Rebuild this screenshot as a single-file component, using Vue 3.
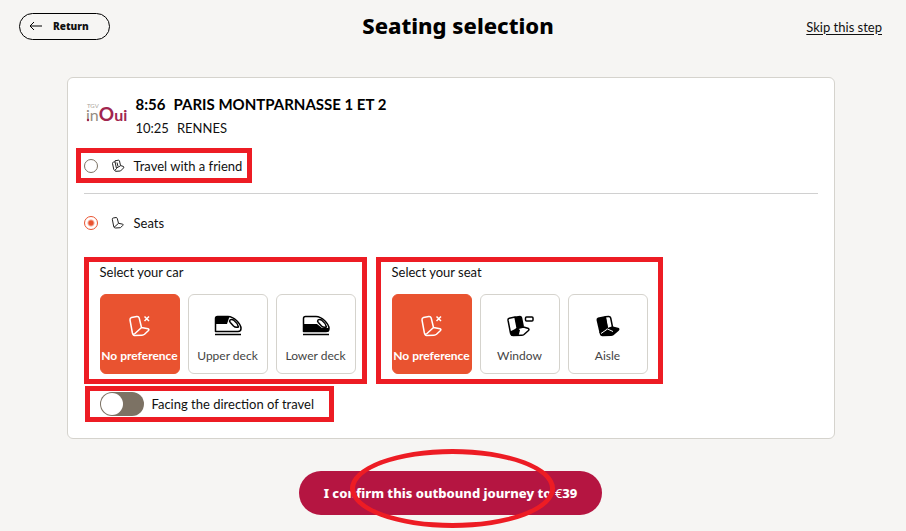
<script setup>
import { ref } from 'vue'

const mode = ref('seats')
const facing = ref(false)
const choices = ref({ car: 'any', seat: 'any' })

const groups = [
  {
    id: 'car',
    title: 'Select your car',
    options: [
      { value: 'any', label: 'No preference', icon: 'any' },
      { value: 'upper', label: 'Upper deck', icon: 'upper' },
      { value: 'lower', label: 'Lower deck', icon: 'lower' },
    ],
  },
  {
    id: 'seat',
    title: 'Select your seat',
    options: [
      { value: 'any', label: 'No preference', icon: 'any' },
      { value: 'window', label: 'Window', icon: 'window' },
      { value: 'aisle', label: 'Aisle', icon: 'aisle' },
    ],
  },
]
</script>

<template>
  <div class="page">
    <header class="top">
      <button class="return" type="button">
        <svg width="14" height="10" viewBox="0 0 14 10" aria-hidden="true">
          <path d="M13 5H1M5 1L1 5l4 4" />
        </svg>
        Return
      </button>
      <h1>Seating selection</h1>
      <a class="skip" href="#">Skip this step</a>
    </header>

    <main>
      <section class="card">
        <div class="journey">
          <svg class="logo" width="44" height="22" viewBox="0 0 44 22" role="img" aria-label="TGV inOui">
            <text class="tgv" x="1" y="5">TGV</text>
            <text x="0" y="18"><tspan class="in">in</tspan><tspan class="o">O</tspan><tspan class="ui">ui</tspan></text>
            <circle cx="2" cy="17" r="1.200" fill="#a1254f" />
          </svg>
          <div class="stops">
            <p class="from"><span>8:56</span><span>PARIS MONTPARNASSE 1 ET 2</span></p>
            <p><span>10:25</span><span>RENNES</span></p>
          </div>
        </div>

        <label class="mode friend">
          <input v-model="mode" type="radio" name="mode" value="friend" />
          <svg width="14" height="14" viewBox="0 0 14 14" aria-hidden="true">
            <path d="M1.500 4.500Q1.300 3.500 2.300 3.200L4 2.800 5.500 9.500 3.800 11.500 2.800 10.500zM4 2.800L4 1.800 7.500 1.200Q8.300 1.200 8.500 2L9.500 6.500 12.500 7.500Q13.200 8 12.500 9L9.500 12 5 12.300Q4 12.300 3.800 11.500M5.500 9L9.500 6.800M6 3.500L7 7.500" />
          </svg>
          <span>Travel with a friend</span>
          <i class="mark mark-friend"></i>
        </label>
        <hr />
        <label class="mode">
          <input v-model="mode" type="radio" name="mode" value="seats" />
          <svg width="14" height="14" viewBox="0 0 14 14" aria-hidden="true">
            <path d="M1.300 3.200Q1.200 2.200 2.200 2L5 1.500Q6 1.500 6.300 2.500L7.500 7.300 4 10.500Q3 11.300 2.700 10.500zM7.500 7.300L11.800 8.200Q12.500 8.500 11.900 9.300L9.500 11.700 4.500 12Q3 12 2.700 10.500" />
          </svg>
          <span>Seats</span>
        </label>

        <div class="groups">
          <fieldset v-for="group in groups" :key="group.id" class="group">
            <legend>{{ group.title }}</legend>
            <div class="tiles">
              <button
                v-for="option in group.options"
                :key="option.value"
                class="tile"
                :class="{ selected: choices[group.id] === option.value }"
                type="button"
                :aria-pressed="choices[group.id] === option.value"
                @click="choices[group.id] = option.value"
              >
                <svg v-if="option.icon === 'any'" width="24" height="24" viewBox="0 0 24 24" aria-hidden="true">
                  <path class="line" d="M2 7Q1.800 5 3.500 4.500L8.800 3.500Q10.700 3.300 11.200 5L13.500 14.500 7 20.500Q5 22 4.400 20zM13.500 14.500L20 15.800Q21.500 16.300 20.500 17.500L16.500 21.300Q15.500 22.200 14 22.200L6.500 22.500Q4.800 22.500 4.400 20M16.500 3.500l4.500 4.500M21 3.500l-4.500 4.500" />
                </svg>
                <svg v-else-if="option.icon === 'upper' || option.icon === 'lower'" width="28" height="24" viewBox="0 0 28 24" aria-hidden="true">
                  <path class="line" d="M1.500 18.500V5.500Q1.500 3.500 3.500 3.500H14C20 3.500 27 11 27 15.500Q27 18.500 24 18.500zM1 21.500H27" />
                  <path v-if="option.icon === 'upper'" d="M1.500 11V5.500Q1.500 3.500 3.500 3.500H15.500L13 11z" />
                  <path v-else d="M1.500 11H15L20 15H27V18.500H1.500z" />
                  <path class="glass" d="M16 7Q17.500 6 19.500 7Q23.500 10 24.500 14Q21.500 15 19.500 13L16.300 9.500Q15 8 16 7z" />
                </svg>
                <svg v-else-if="option.icon === 'window'" width="28" height="24" viewBox="0 0 28 24" aria-hidden="true">
                  <path class="line" d="M2 7.200Q1.800 5.700 3.300 5.300L9 4 11.200 15 6.500 20.500 4.500 20z" />
                  <path d="M8.800 3.500L14 2.800Q15.800 2.800 16.200 4.500L18 13.500 11.200 16zM4 18.500L11.200 15 14 17 12.500 23H7Q4.800 23 4.300 21z" />
                  <path class="line" d="M11.200 15.500L17.500 14 22.500 15.500Q23.500 16.200 22.500 17.500L18 21.500Q17 22.300 15.500 22.300L7 22.500Q5.200 22.500 4.800 20.500" />
                  <path class="line" d="M20.500 4H26Q27 4 27 5V7Q27 8 26 8H20.500Q19.500 8 19.500 7V5Q19.500 4 20.500 4z" />
                </svg>
                <svg v-else width="24" height="24" viewBox="0 0 24 24" aria-hidden="true">
                  <path d="M.5 7Q.3 5 2 4.500L9.500 3 11.800 14.500 5 21 3.500 20z" />
                  <path class="line" d="M9.300 3.800L12.500 3.400Q14.300 3.300 14.700 5L16.500 14 11.500 16z" />
                  <path d="M3.500 19L11 15.500 17 13.500 23 15Q24 16 23 17.500L17.500 22.300Q16.500 23 15 23L6.500 23.200Q4 23.200 3.600 20z" />
                  <path class="seam" d="M11.500 16L17 18.500M11.500 16L5 20.500" />
                </svg>
                <span>{{ option.label }}</span>
              </button>
            </div>
            <i class="mark" :class="'mark-' + group.id"></i>
          </fieldset>
        </div>

        <label class="facing">
          <input v-model="facing" type="checkbox" role="switch" />
          <span>Facing the direction of travel</span>
          <i class="mark mark-facing"></i>
        </label>
      </section>

      <div class="confirm-row">
        <button class="confirm" type="button">
          I confirm this outbound journey to <span class="euro">€</span>39
          <i class="ring"></i>
        </button>
      </div>
    </main>
  </div>
</template>

<style>
body {
  margin: 0;
  background: #f6f5f3;
}
</style>

<style scoped>
* {
  box-sizing: border-box;
}
.page {
  min-height: 100vh;
  overflow: hidden;
  background: #f6f5f3;
  color: #111;
  font: 13px/24px Lato, "Liberation Sans", sans-serif;
}
button {
  font: inherit;
  color: inherit;
  cursor: pointer;
}
.top {
  display: flex;
  align-items: center;
  justify-content: space-between;
  padding: 12px 24px 0 19px;
}
.return {
  display: flex;
  align-items: center;
  gap: 10px;
  height: 27px;
  padding: 0 20px 1px 9px;
  border: 1px solid #000;
  border-radius: 14px;
  background: none;
  font: 800 10px/16px "Open Sans", sans-serif;
}
.return svg {
  fill: none;
  stroke: #000;
}
h1 {
  margin: 0 0 3px;
  color: #000;
  font: 800 22px/26px "Noto Sans", sans-serif;
}
.skip {
  color: #111;
  text-decoration: underline;
  text-underline-offset: 2px;
}
main {
  padding: 36px 5px 0 0;
}
.card {
  max-width: 768px;
  margin: 0 auto;
  padding: 14px 16px 22px;
  border: 1px solid #d5d3cd;
  border-radius: 6px;
  background: #fff;
}
.journey {
  display: flex;
  gap: 6px;
}
.logo {
  margin: 11px 0 0 2px;
}
.logo text {
  font-family: Lato, sans-serif;
}
.tgv {
  fill: #aaa39b;
  font-size: 6px;
}
.in {
  fill: #948b81;
  font-size: 16px;
}
.o {
  fill: #a1254f;
  font-size: 19px;
  font-weight: 700;
}
.ui {
  fill: #a1254f;
  font-size: 16px;
  font-weight: 700;
}
.stops p {
  display: flex;
  gap: 8px;
  margin: 0;
}
.stops .from {
  color: #000;
  font-size: 15px;
  font-weight: 700;
}
.mode {
  position: relative;
  display: flex;
  align-items: center;
  width: fit-content;
  height: 24px;
}
.friend {
  margin-top: 14px;
}
.mode svg {
  margin: 0 9px 0 13px;
  fill: none;
  stroke: #222;
  stroke-linejoin: round;
}
.mode input {
  appearance: none;
  width: 14px;
  height: 14px;
  margin: 0;
  border: 1px solid #7c7264;
  border-radius: 50%;
  background: #fff;
}
.mode input:checked {
  border-color: #e95330;
  background: radial-gradient(circle, #e95330 2px, #fff 4px);
}
hr {
  height: 1px;
  margin: 15px 0 17px;
  border: 0;
  background: #d0d0d0;
}
.groups {
  display: flex;
  flex-wrap: wrap;
  gap: 36px;
  padding: 25px 16px 0;
}
.group {
  position: relative;
  min-width: 0;
  margin: 0;
  padding: 0;
  border: 0;
}
legend {
  padding: 0;
}
.tiles {
  display: flex;
  gap: 8px;
  padding-top: 10px;
}
.tile {
  display: flex;
  flex-direction: column;
  align-items: center;
  gap: 11px;
  width: 80px;
  height: 80px;
  padding: 18px 0 0;
  border: 1px solid #d5d3cd;
  border-radius: 6px;
  background: #fff;
  color: #444;
  font-size: 12px;
  line-height: 16px;
  white-space: nowrap;
}
.tile svg {
  fill: #000;
  stroke-width: 1.5;
  stroke-linejoin: round;
}
.line {
  fill: none;
  stroke: #000;
}
.glass {
  fill: #fff;
  stroke: #000;
}
.seam {
  fill: none;
  stroke: #fff;
  stroke-width: 1;
}
.selected {
  border-color: #e95330;
  background: #e95330;
  color: #fff;
  font-weight: 700;
}
.selected .line {
  stroke: #fff;
}
.facing {
  position: relative;
  display: flex;
  align-items: center;
  gap: 8px;
  width: fit-content;
  margin: 18px 0 0 16px;
}
.facing input {
  appearance: none;
  width: 44px;
  height: 24px;
  margin: 0;
  padding: 1px;
  border-radius: 12px;
  background: #7c7264;
}
.facing input::before {
  content: "";
  display: block;
  width: 22px;
  height: 22px;
  border-radius: 50%;
  background: #fff;
}
.facing input:checked::before {
  margin-left: 20px;
}
.mark {
  position: absolute;
  border: 5px solid #ed1c24;
  pointer-events: none;
}
.mark-friend {
  inset: -6px -10px -5px -8px;
}
.mark-car {
  inset: -27px -11px -10px -16px;
}
.mark-seat {
  inset: -27px -15px -10px -16px;
}
.mark-facing {
  inset: -6px -20px -6px -15px;
}
.confirm-row {
  display: flex;
  justify-content: center;
  padding-top: 32px;
}
.confirm {
  position: relative;
  height: 44px;
  padding: 0 25px;
  border: 0;
  border-radius: 22px;
  background: #b51541;
  color: #fff;
  font: 800 13px/20px "Noto Sans", sans-serif;
  white-space: nowrap;
}
.euro {
  font-weight: 400;
}
.ring {
  position: absolute;
  inset: -22px 47px -13px 51px;
  border: 5px solid #ed1c24;
  border-radius: 50%;
  pointer-events: none;
}
</style>
